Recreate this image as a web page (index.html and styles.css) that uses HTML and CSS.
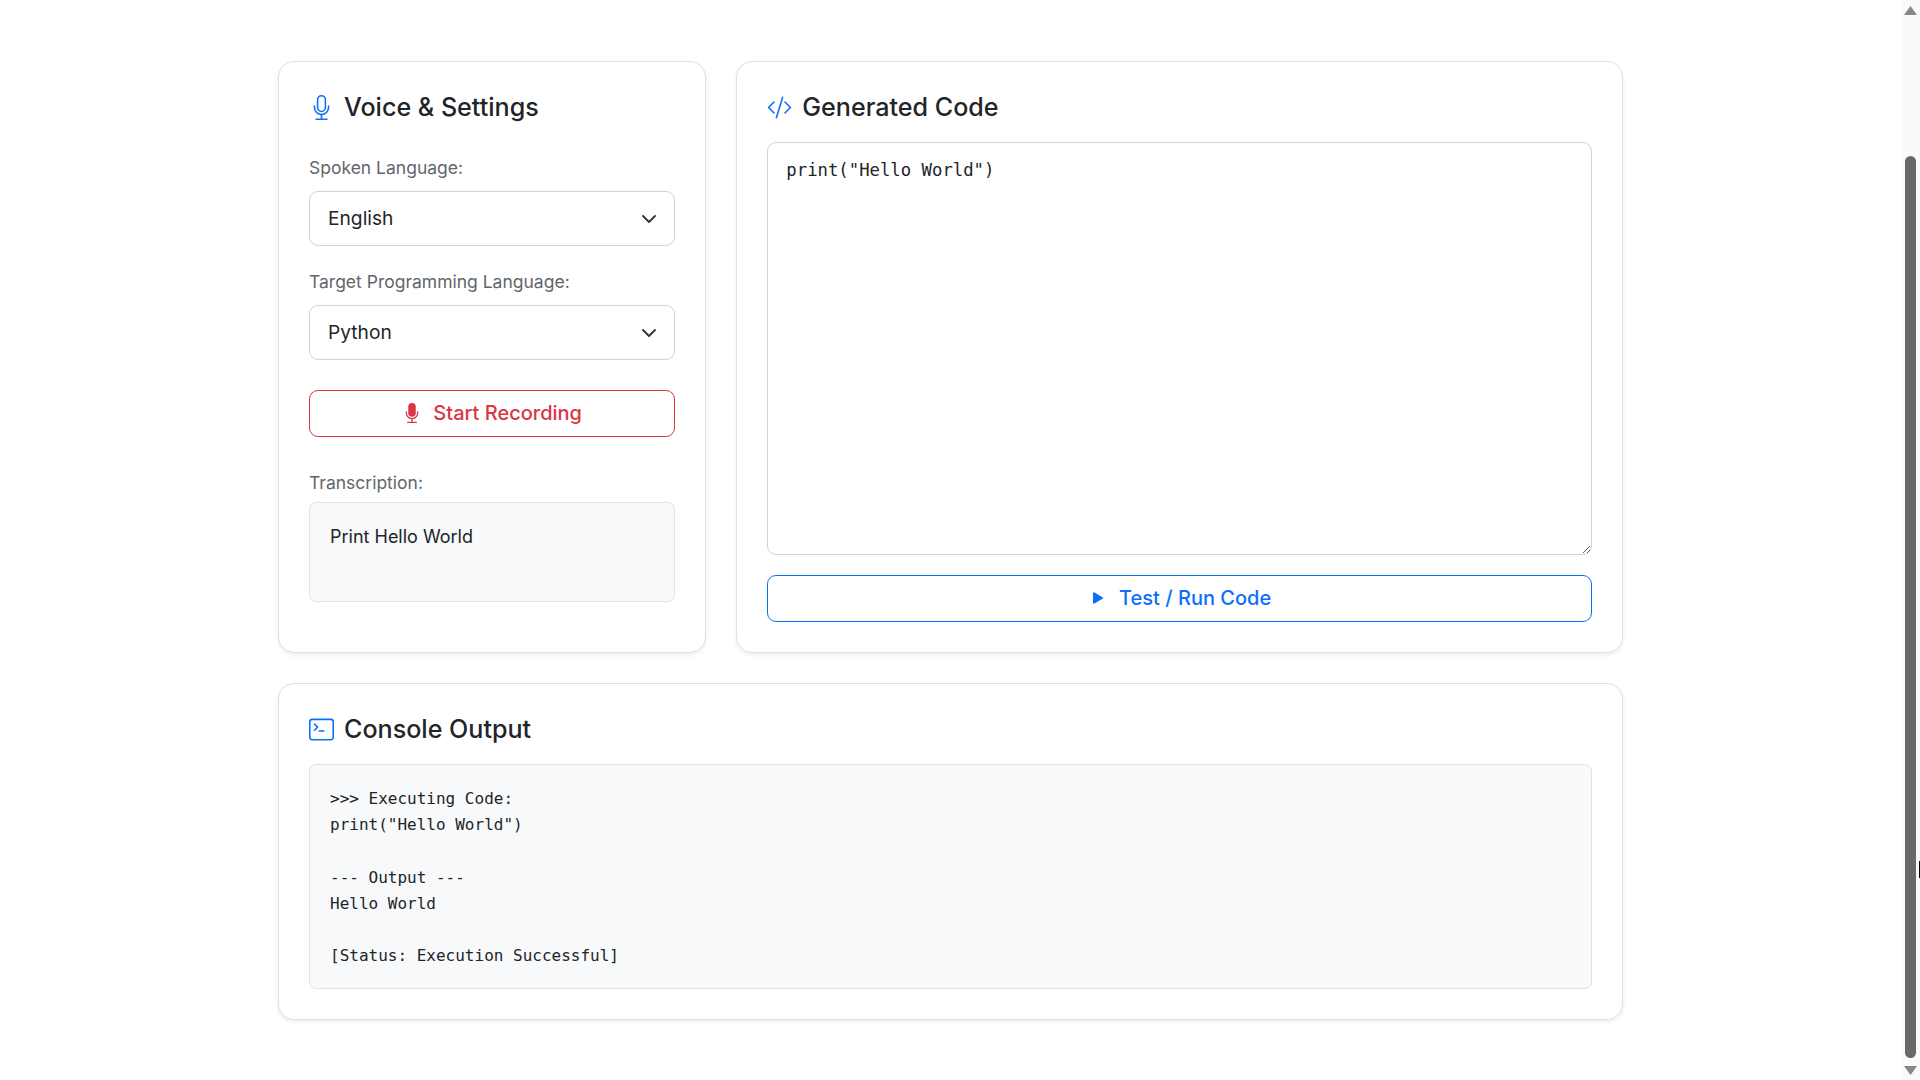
FILE: index.html
```html
<!DOCTYPE html>
<html lang="en">
<head>
    <meta charset="UTF-8">
    <meta name="viewport" content="width=device-width, initial-scale=1.0">
    <title>Voice to Code</title>
    <link rel="stylesheet" href="styles.css">
</head>
<body>
    <div class="page">
        <main class="container">
            <section class="card settings-card">
                <h2 class="card-title">
                    <svg class="title-icon" viewBox="0 0 16 16" fill="currentColor"><path d="M3.5 6.5A.5.5 0 0 1 4 7v1a4 4 0 0 0 8 0V7a.5.5 0 0 1 1 0v1a5 5 0 0 1-4.5 4.975V15h3a.5.5 0 0 1 0 1h-7a.5.5 0 0 1 0-1h3v-2.025A5 5 0 0 1 3 8V7a.5.5 0 0 1 .5-.5"/><path d="M10 8a2 2 0 1 1-4 0V3a2 2 0 1 1 4 0zM8 0a3 3 0 0 0-3 3v5a3 3 0 0 0 6 0V3a3 3 0 0 0-3-3"/></svg>
                    Voice &amp; Settings
                </h2>

                <label class="field-label spoken-label" for="spoken-language">Spoken Language:</label>
                <select id="spoken-language" class="select-box">
                    <option>English</option>
                </select>

                <label class="field-label" for="target-language">Target Programming Language:</label>
                <select id="target-language" class="select-box">
                    <option>Python</option>
                </select>

                <button class="btn btn-record" type="button">
                    <svg class="btn-icon" viewBox="0 0 16 16" fill="currentColor"><path d="M5 3a3 3 0 0 1 6 0v5a3 3 0 0 1-6 0z"/><path d="M3.5 6.5A.5.5 0 0 1 4 7v1a4 4 0 0 0 8 0V7a.5.5 0 0 1 1 0v1a5 5 0 0 1-4.5 4.975V15h3a.5.5 0 0 1 0 1h-7a.5.5 0 0 1 0-1h3v-2.025A5 5 0 0 1 3 8V7a.5.5 0 0 1 .5-.5"/></svg>
                    Start Recording
                </button>

                <div class="field-label transcription-label">Transcription:</div>
                <div class="transcription-box">Print Hello World</div>
            </section>

            <section class="card code-card">
                <h2 class="card-title">
                    <svg class="title-icon" viewBox="0 0 16 16" fill="currentColor"><path d="M10.478 1.647a.5.5 0 1 0-.956-.294l-4 13a.5.5 0 0 0 .956.294zM4.854 4.146a.5.5 0 0 1 0 .708L1.707 8l3.147 3.146a.5.5 0 0 1-.708.708l-3.5-3.5a.5.5 0 0 1 0-.708l3.5-3.5a.5.5 0 0 1 .708 0m6.292 0a.5.5 0 0 0 0 .708L14.293 8l-3.147 3.146a.5.5 0 0 0 .708.708l3.5-3.5a.5.5 0 0 0 0-.708l-3.5-3.5a.5.5 0 0 0-.708 0"/></svg>
                    Generated Code
                </h2>
                <textarea class="code-input" spellcheck="false">print("Hello World")</textarea>
                <button class="btn btn-run" type="button">
                    <svg class="btn-icon" viewBox="0 0 16 16" fill="currentColor"><path d="m11.596 8.697-6.363 3.692c-.54.313-1.233-.066-1.233-.697V4.308c0-.63.692-1.01 1.233-.696l6.363 3.692a.802.802 0 0 1 0 1.393"/></svg>
                    Test / Run Code
                </button>
            </section>

            <section class="card console-card">
                <h2 class="card-title">
                    <svg class="title-icon" viewBox="0 0 16 16" fill="currentColor"><path d="M6 9a.5.5 0 0 1 .5-.5h3a.5.5 0 0 1 0 1h-3A.5.5 0 0 1 6 9M3.854 4.146a.5.5 0 1 0-.708.708L4.793 6.5 3.146 8.146a.5.5 0 1 0 .708.708l2-2a.5.5 0 0 0 0-.708z"/><path d="M2 1a2 2 0 0 0-2 2v10a2 2 0 0 0 2 2h12a2 2 0 0 0 2-2V3a2 2 0 0 0-2-2zm12 1a1 1 0 0 1 1 1v10a1 1 0 0 1-1 1H2a1 1 0 0 1-1-1V3a1 1 0 0 1 1-1z"/></svg>
                    Console Output
                </h2>
                <pre class="console-output">&gt;&gt;&gt; Executing Code:
print("Hello World")

--- Output ---
Hello World

[Status: Execution Successful]</pre>
            </section>
        </main>

        <div class="scrollbar">
            <span class="scroll-arrow scroll-up"></span>
            <span class="scroll-thumb"></span>
            <span class="scroll-arrow scroll-down"></span>
        </div>
    </div>
    <span class="mouse-cursor"></span>
</body>
</html>
```

FILE: styles.css
```css
* {
    box-sizing: border-box;
}

html,
body {
    margin: 0;
    height: 100%;
    overflow: hidden;
}

body {
    background-color: #fff;
    color: #212529;
    font-family: Inter, "Liberation Sans", sans-serif;
    font-size: 19.2px;
}

.page {
    display: flex;
    height: 100%;
}

/* 12 column layout */
.container {
    flex: 1;
    display: grid;
    grid-template-columns: repeat(12, 1fr);
    grid-template-rows: 592px 337px;
    gap: 30px;
    align-content: start;
    padding: 61px 278px 0;
}

.card {
    display: flex;
    flex-direction: column;
    padding: 20px 30px 30px;
    background-color: #fff;
    border: 1px solid #dee2e6;
    border-radius: 16px;
    box-shadow: 0 2px 4px rgba(0, 0, 0, 0.075);
}

.settings-card {
    grid-column: span 4;
}

.code-card {
    grid-column: span 8;
}

.console-card {
    grid-column: span 12;
}

.card-title {
    display: flex;
    align-items: center;
    gap: 10px;
    height: 36px;
    margin: 7px 0 17px;
    font-size: 25.1px;
    font-weight: 500;
    line-height: 36px;
}

.title-icon {
    width: 25px;
    height: 25px;
    flex-shrink: 0;
    color: #0d6efd;
}

.field-label {
    height: 26px;
    margin-bottom: 10px;
    color: #5f666d;
    font-size: 17.5px;
    line-height: 26px;
}

.spoken-label {
    margin-top: 13px;
}

.transcription-label {
    margin-bottom: 6px;
}

.select-box {
    display: block;
    width: 100%;
    height: 55px;
    flex-shrink: 0;
    margin-bottom: 23px;
    padding: 0 50px 2px 18px;
    appearance: none;
    background-color: #fff;
    background-image: url("data:image/svg+xml,%3csvg xmlns='http://www.w3.org/2000/svg' viewBox='0 0 16 16'%3e%3cpath fill='none' stroke='%23343a40' stroke-linecap='round' stroke-linejoin='round' stroke-width='2' d='m2 5 6 6 6-6'/%3e%3c/svg%3e");
    background-repeat: no-repeat;
    background-position: right 17px center;
    background-size: 16px 16px;
    border: 1px solid #ced4da;
    border-radius: 9px;
    color: #212529;
    font-family: inherit;
    font-size: 19.2px;
}

.btn {
    display: flex;
    align-items: center;
    justify-content: center;
    gap: 11px;
    width: 100%;
    height: 47px;
    flex-shrink: 0;
    padding: 0 0 1px;
    background-color: #fff;
    border-radius: 9px;
    font-family: inherit;
    font-size: 20px;
    font-weight: 500;
}

.btn-icon {
    width: 20px;
    height: 20px;
}

.btn-record {
    margin-top: 7px;
    margin-bottom: 33px;
    border: 1px solid #dc3545;
    color: #dc3545;
}

.btn-run {
    margin-top: 20px;
    border: 1px solid #0d6efd;
    color: #0d6efd;
}

.transcription-box {
    height: 100px;
    padding: 20px;
    background-color: #f8f9fa;
    border: 1px solid #dee2e6;
    border-radius: 7px;
    font-size: 18px;
    line-height: 27px;
}

.code-input {
    display: block;
    width: 100%;
    height: 413px;
    flex-shrink: 0;
    padding: 14px 18px;
    border: 1px solid #ced4da;
    border-radius: 9px;
    color: #212529;
    font-family: "DejaVu Sans Mono", "Liberation Mono", monospace;
    font-size: 17.3px;
    line-height: 26px;
    resize: vertical;
}

.console-output {
    margin: 0;
    height: 225px;
    padding: 21px 20px;
    background-color: #f8f9fa;
    border: 1px solid #dee2e6;
    border-radius: 7px;
    font-family: "DejaVu Sans Mono", "Liberation Mono", monospace;
    font-size: 16px;
    line-height: 26.2px;
}

/* scrollbar drawn by hand, page is shown scrolled */
.scrollbar {
    display: flex;
    flex-direction: column;
    align-items: center;
    width: 19px;
    flex-shrink: 0;
    background-color: #fafafa;
}

.scroll-arrow {
    width: 13px;
    height: 9px;
    background-color: #868686;
}

.scroll-up {
    margin-top: 6px;
    clip-path: polygon(50% 0, 100% 100%, 0 100%);
}

.scroll-thumb {
    width: 11px;
    height: 902px;
    margin-top: 141px;
    background-color: #686868;
    border-radius: 6px;
}

.scroll-down {
    margin-top: 8px;
    clip-path: polygon(0 0, 100% 0, 50% 100%);
}

.mouse-cursor {
    position: absolute;
    top: 861px;
    left: 1919px;
    width: 1px;
    height: 17px;
    background-color: #000;
}
```
